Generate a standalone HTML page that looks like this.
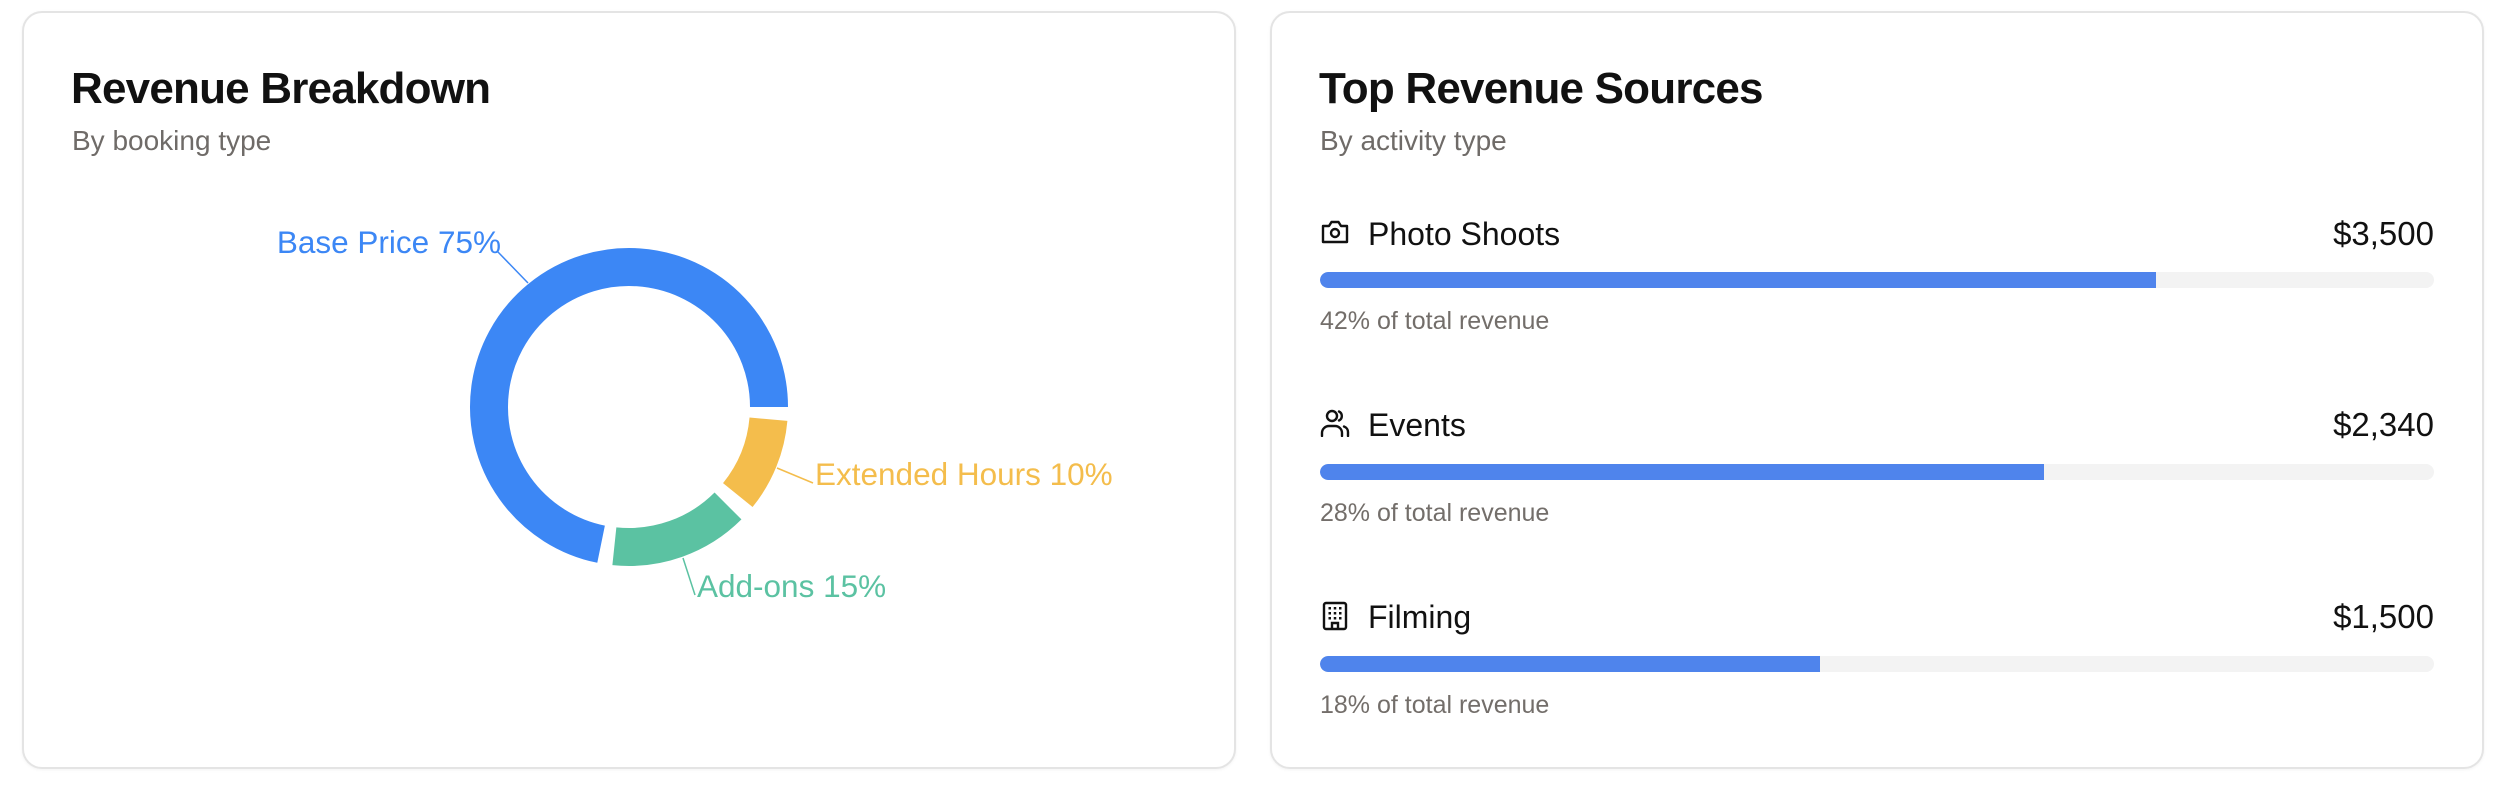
<!DOCTYPE html>
<html><head><meta charset="utf-8"><style>
*{margin:0;padding:0;box-sizing:border-box}
body{width:2506px;height:794px;background:#fff;font-family:"Liberation Sans",sans-serif;position:relative;overflow:hidden}
.card{position:absolute;top:11px;height:758px;border:2px solid #e4e4e4;border-radius:20px;background:#fff;box-shadow:0 1px 3px rgba(0,0,0,0.05)}
.t{position:absolute;white-space:nowrap;line-height:1}
.title{font-size:44px;font-weight:bold;color:#111;letter-spacing:-0.8px}
.sub{font-size:28px;color:#6f6b68}
.lab{font-size:32px;color:#111}
.amt{font-size:33px;color:#111;text-align:right}
.pct{font-size:25px;color:#736e6a}
.bar{position:absolute;left:1320px;width:1114px;height:16px;border-radius:8px;background:#f3f3f3;overflow:hidden}
.bar i{position:absolute;left:0;top:0;bottom:0;background:#4f84ec;border-radius:8px 0 0 8px}
</style></head><body>
<div class="card" style="left:22px;width:1214px"></div>
<div class="card" style="left:1270px;width:1214px"></div>

<div class="t title" style="left:71px;top:67px">Revenue Breakdown</div>
<div class="t sub" style="left:72px;top:127px">By booking type</div>

<svg style="position:absolute;left:0;top:0" width="1250" height="794">
<g fill="none" stroke-width="38">
<path d="M768.47 419.20 A140 140 0 0 1 737.80 495.10" stroke="#f4bd4c"/>
<path d="M728.00 505.99 A140 140 0 0 1 614.37 546.24" stroke="#5bc2a2"/>
<path d="M601.08 544.19 A140 140 0 1 1 769 407" stroke="#3c87f5"/>
</g>
<g stroke-width="1.5" fill="none">
<path d="M498 252 L528 283" stroke="#3c87f5"/>
<path d="M777 468 L813 483" stroke="#f4bd4c"/>
<path d="M683 558 L695 595" stroke="#5bc2a2"/>
</g>
<g font-family="Liberation Sans, sans-serif" font-size="31.5">
<text x="501" y="253" text-anchor="end" fill="#3c87f5">Base Price 75%</text>
<text x="815" y="485" fill="#f4bd4c">Extended Hours 10%</text>
<text x="697" y="597" fill="#5bc2a2">Add-ons 15%</text>
</g>
</svg>

<div class="t title" style="left:1319px;top:67px">Top Revenue Sources</div>
<div class="t sub" style="left:1320px;top:127px">By activity type</div>

<svg style="position:absolute;left:1320px;top:219px" width="30" height="26" viewBox="0 0 30 26" fill="none" stroke="#111" stroke-width="2.4" stroke-linejoin="round">
<path d="M3 7 H9 L11.5 3 H18.5 L21 7 H27 V23 H3 Z"/><circle cx="15" cy="14" r="4"/>
</svg>
<div class="t lab" style="left:1368px;top:218px">Photo Shoots</div>
<div class="t amt" style="right:72px;top:217px">$3,500</div>
<div class="bar" style="top:272px"><i style="width:836px"></i></div>
<div class="t pct" style="left:1320px;top:309px">42% of total revenue</div>

<svg style="position:absolute;left:1320px;top:409px" width="30" height="28" viewBox="0 0 30 28" fill="none" stroke="#111" stroke-width="2.4" stroke-linecap="round">
<circle cx="12" cy="7" r="5"/><path d="M2 27 V24 A7 7 0 0 1 9 17 H15 A7 7 0 0 1 22 24 V27"/><path d="M19 2.5 A5 5 0 0 1 19 11.5"/><path d="M24 17.5 A6 6 0 0 1 28 23.5 V27"/>
</svg>
<div class="t lab" style="left:1368px;top:409px">Events</div>
<div class="t amt" style="right:72px;top:408px">$2,340</div>
<div class="bar" style="top:464px"><i style="width:724px"></i></div>
<div class="t pct" style="left:1320px;top:501px">28% of total revenue</div>

<svg style="position:absolute;left:1322px;top:601px" width="26" height="30" viewBox="0 0 26 30" fill="none" stroke="#111" stroke-width="2.4">
<rect x="2" y="2" width="22" height="26" rx="2"/><path d="M10 28 V22 H16 V28"/>
<g fill="#111" stroke="none"><rect x="6.5" y="6" width="2.5" height="2.5"/><rect x="11.75" y="6" width="2.5" height="2.5"/><rect x="17" y="6" width="2.5" height="2.5"/><rect x="6.5" y="11" width="2.5" height="2.5"/><rect x="11.75" y="11" width="2.5" height="2.5"/><rect x="17" y="11" width="2.5" height="2.5"/><rect x="6.5" y="16" width="2.5" height="2.5"/><rect x="11.75" y="16" width="2.5" height="2.5"/><rect x="17" y="16" width="2.5" height="2.5"/></g>
</svg>
<div class="t lab" style="left:1368px;top:601px">Filming</div>
<div class="t amt" style="right:72px;top:600px">$1,500</div>
<div class="bar" style="top:656px"><i style="width:500px"></i></div>
<div class="t pct" style="left:1320px;top:693px">18% of total revenue</div>
</body></html>
